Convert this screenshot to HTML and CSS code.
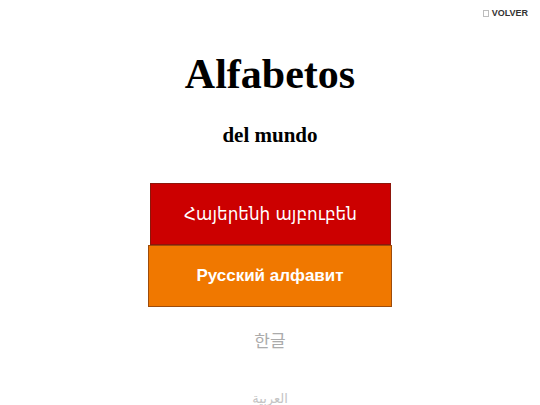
FILE: index.html
```html
<!DOCTYPE html>
<html lang="es">
<head>
<meta charset="utf-8">
<title>Alfabetos del mundo</title>
<link rel="stylesheet" href="styles.css">
</head>
<body>
<div class="topbar">
  <a class="back" href="#"><span class="tofu"></span>VOLVER</a>
</div>
<h1 class="title">Alfabetos</h1>
<h2 class="subtitle">del mundo</h2>
<div class="list">
  <div class="item item-hy">Հայերենի այբուբեն</div>
  <div class="item item-ru">Русский алфавит</div>
  <div class="faded faded-ko">한글</div>
  <div class="faded faded-ar" dir="rtl">العربية</div>
</div>
</body>
</html>
```

FILE: styles.css
```css
html, body {
  margin: 0;
  padding: 0;
  background: #ffffff;
  width: 540px;
  height: 405px;
  overflow: hidden;
}

body {
  font-family: "Liberation Sans", Arial, sans-serif;
}

.topbar {
  display: flex;
  justify-content: flex-end;
  align-items: center;
  height: 26px;
  padding-right: 12px;
}

.back {
  display: flex;
  align-items: center;
  gap: 3px;
  font-size: 9px;
  font-weight: bold;
  color: #333333;
  text-decoration: none;
  line-height: 10px;
}

.tofu {
  display: inline-block;
  width: 4px;
  height: 5px;
  border: 1px solid #bdbdbd;
}

.title {
  margin: 27px 0 0;
  font-family: "Liberation Serif", "Times New Roman", serif;
  font-size: 42px;
  line-height: 42px;
  font-weight: bold;
  text-align: center;
  color: #000;
}

.subtitle {
  margin: 30px 0 0;
  font-family: "Liberation Serif", "Times New Roman", serif;
  font-size: 21px;
  line-height: 21px;
  font-weight: bold;
  text-align: center;
  color: #000;
}

.list {
  display: flex;
  flex-direction: column;
  align-items: center;
  margin-top: 37px;
}

.item {
  box-sizing: border-box;
  height: 62px;
  display: flex;
  align-items: center;
  justify-content: center;
  color: #ffffff;
  font-size: 17px;
  border: 1px solid rgba(90, 40, 20, 0.55);
}

.item-hy {
  width: 241px;
  margin-left: 1px;
  background: #cc0000;
  font-family: "DejaVu Sans", "Noto Sans", sans-serif;
  font-size: 16.8px;
}

.item-ru {
  width: 244px;
  background: #f07800;
  font-weight: bold;
}

.faded {
  text-align: center;
}

.faded-ko {
  margin-top: 22px;
  font-family: "Noto Sans CJK KR", sans-serif;
  font-size: 17px;
  line-height: 22px;
  color: #ababab;
}

.faded-ar {
  margin-top: 41px;
  font-family: "DejaVu Sans", sans-serif;
  font-size: 13px;
  line-height: 14px;
  color: #c4c4c4;
}
```
